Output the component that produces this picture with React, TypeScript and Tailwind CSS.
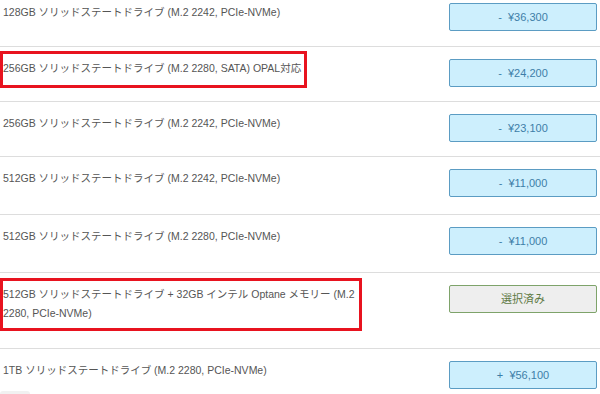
import React from "react";

type Row = {
  text: string;
  price?: string;
  selected?: boolean;
  h: string;
  box?: string;
};

const rows: Row[] = [
  { text: "128GB ソリッドステートドライブ (M.2 2242, PCIe-NVMe)", price: "-  ¥36,300", h: "h-[55px]" },
  { text: "256GB ソリッドステートドライブ (M.2 2280, SATA) OPAL対応", price: "-  ¥24,200", h: "h-[55px]", box: "w-[307px] h-[37px] top-[4px]" },
  { text: "256GB ソリッドステートドライブ (M.2 2242, PCIe-NVMe)", price: "-  ¥23,100", h: "h-[55px]" },
  { text: "512GB ソリッドステートドライブ (M.2 2242, PCIe-NVMe)", price: "-  ¥11,000", h: "h-[58px]" },
  { text: "512GB ソリッドステートドライブ (M.2 2280, PCIe-NVMe)", price: "-  ¥11,000", h: "h-[58px]" },
  { text: "512GB ソリッドステートドライブ + 32GB インテル Optane メモリー (M.2 2280, PCIe-NVMe)", selected: true, h: "h-[76px]", box: "w-[362px] h-[53px] top-[5px]" },
  { text: "1TB ソリッドステートドライブ (M.2 2280, PCIe-NVMe)", price: "+  ¥56,100", h: "h-[43px]" },
];

export default function App() {
  return (
    <div
      className="w-[600px] h-[394px] overflow-hidden bg-white"
      style={{ fontFamily: '"Liberation Sans", Arial, "Noto Sans CJK JP", sans-serif' }}
    >
      <div className="-mt-[9px]">
        {rows.map((r, i) => (
          <div
            key={i}
            className={`relative flex items-start ${r.h} ${i > 0 ? "border-t border-[#dddddd]" : ""}`}
          >
            <div className="w-[360px] pl-[3px] pt-[12px] text-[10.5px] leading-[19px] text-[#555555]">
              {r.text}
            </div>
            {r.box && (
              <div className={`absolute left-0 border-[3px] border-[#e8131f] ${r.box}`} />
            )}
            <div className="ml-auto mr-[3px] pt-[12px]">
              {r.selected ? (
                <div className="w-[148px] h-[28px] flex items-center justify-center rounded-[2px] border border-[#7ea36a] bg-[#eeeeee] text-[11px] text-[#5f7a45]">
                  選択済み
                </div>
              ) : (
                <div className="w-[148px] h-[28px] flex items-center justify-center rounded-[2px] border border-[#5b9cc3] bg-[#cdeffd] text-[11px] text-[#3d7ea8] whitespace-pre">
                  {r.price}
                </div>
              )}
            </div>
          </div>
        ))}
        <div className="w-[30px] h-[12px] rounded-t-[3px] bg-[#f1f1f1]" />
      </div>
    </div>
  );
}
